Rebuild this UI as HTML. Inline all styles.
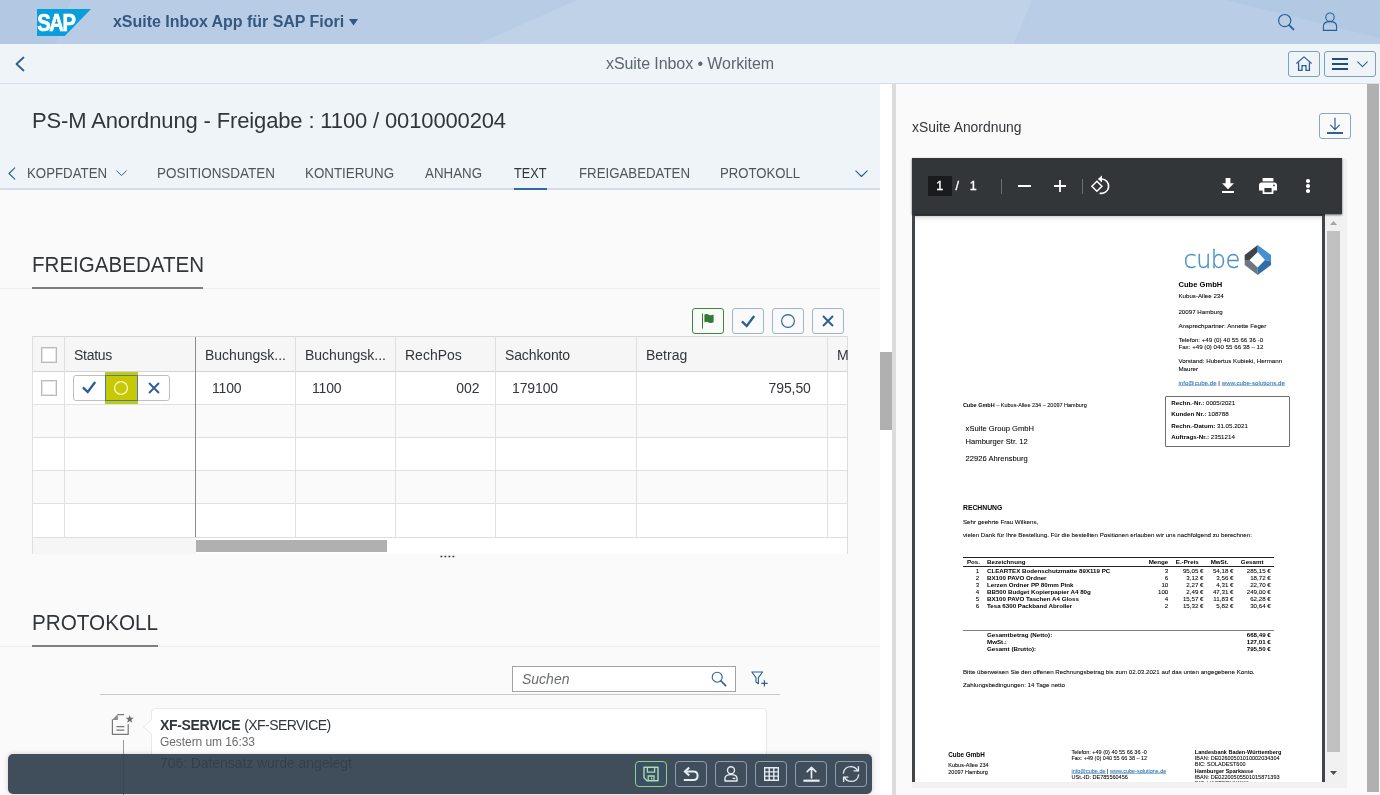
<!DOCTYPE html>
<html lang="de">
<head>
<meta charset="utf-8">
<title>xSuite Inbox • Workitem</title>
<style>
*{box-sizing:border-box;margin:0;padding:0}
html,body{width:1380px;height:795px;overflow:hidden;background:#fafafa}
body{font-family:"Liberation Sans",sans-serif;color:#32363a;position:relative;font-size:14px;will-change:transform}
.abs{position:absolute}
.t{position:absolute;white-space:nowrap;line-height:1}
svg{position:absolute;overflow:visible}
/* shell */
#shell{left:0;top:0;width:1380px;height:44px;background:#b8cce5;overflow:hidden}
#sub{left:0;top:44px;width:1380px;height:40px;background:#eff4f9;border-bottom:1px solid #d3dfed}
/* left pane */
#lhead{left:0;top:84px;width:880px;height:106px;background:#eff4f9}
#lbody{left:0;top:190px;width:880px;height:605px;background:#fafafa}
#vtrack{left:880px;top:84px;width:12px;height:711px;background:#fff}
#vthumb{left:880px;top:352px;width:12px;height:78px;background:#b0b0b0}
#split{left:892px;top:84px;width:4px;height:711px;background:#dcdcdc}
#rpane{left:896px;top:84px;width:484px;height:711px;background:#fafafa}
.tab{font-size:14px;color:#515559;top:166px}
.btn{position:absolute;border:1px solid #8aa3c0;border-radius:3px;background:#fff}
</style>
</head>
<body>
<!-- SHELL HEADER -->
<div id="shell" class="abs">
  <svg width="1380" height="44" viewBox="0 0 1380 44"><polygon points="0,0 71,0 56,44 0,44" fill="#b2c8e3"/><polygon points="71,0 577,0 478,44 56,44" fill="#b8cce5"/><polygon points="577,0 1032,0 1014,44 478,44" fill="#bfd2e8"/><polygon points="1032,0 1226,0 1380,38 1380,44 1015,44" fill="#b9cde6"/><polygon points="1226,0 1380,0 1380,38" fill="#b2c9e3"/></svg>
  <svg style="left:37px;top:9px" width="54" height="27" viewBox="0 0 54 27"><polygon points="0,0 54,0 27.8,27 0,27" fill="#069fdb"/><text transform="translate(0.2,22.1) scale(.858,1)" font-family="Liberation Sans, sans-serif" font-weight="bold" font-size="23.5" fill="#fff" stroke="#fff" stroke-width=".7" letter-spacing="-1.6">SAP</text></svg>
  <div class="t" style="left:113px;top:14px;font-size:16px;font-weight:bold;color:#34587f;letter-spacing:-.03px">xSuite Inbox App für SAP Fiori</div>
  <svg style="left:349px;top:18.6px" width="9" height="7" viewBox="0 0 9 7"><polygon points="0,0 9,0 4.5,6.6" fill="#34587f"/></svg>
</div>
<!-- SUB HEADER -->
<div id="sub" class="abs"></div>
<div class="t" style="left:606px;top:56px;font-size:16px;color:#5d6670;letter-spacing:-.08px">xSuite Inbox • Workitem</div>

<!-- LEFT PANE -->
<div id="lhead" class="abs"></div>
<div id="lbody" class="abs"></div>
<div id="vtrack" class="abs"></div>
<div id="vthumb" class="abs"></div>
<div id="split" class="abs"></div>
<div id="rpane" class="abs"></div>

<div class="t" style="left:32px;top:110px;font-size:22px;color:#32363a;letter-spacing:-.14px">PS-M Anordnung - Freigabe : 1100 / 0010000204</div>

<!-- sub header icons -->
<svg style="left:14px;top:56px" width="12" height="16" viewBox="0 0 12 16"><path d="M9.5 1.5 L2.5 8 L9.5 14.5" fill="none" stroke="#2b5f94" stroke-width="1.8" stroke-linecap="round" stroke-linejoin="round"/></svg>
<div class="btn" style="left:1288px;top:51px;width:32px;height:26px;background:transparent;border-color:#7f9fc0"></div>
<div class="btn" style="left:1324px;top:51px;width:52px;height:26px;background:transparent;border-color:#7f9fc0"></div>
<svg style="left:1296px;top:56px" width="16" height="16" viewBox="0 0 16 16"><path d="M0.7 7.2 L8 0.9 L15.3 7.2" fill="none" stroke="#2b5f94" stroke-width="1.2" stroke-linejoin="round" stroke-linecap="round"/><path d="M2.6 6.6 V14.4 H6 V9.6 H10 V14.4 H13.4 V6.6" fill="none" stroke="#2b5f94" stroke-width="1.3"/></svg>
<svg style="left:1332px;top:58px" width="16" height="12" viewBox="0 0 16 12"><path d="M0 1 H16 M0 6 H16 M0 11 H16" stroke="#1f4e7e" stroke-width="2"/></svg>
<svg style="left:1357px;top:61px" width="11" height="7" viewBox="0 0 11 7"><path d="M0.7 0.8 L5.5 5.6 L10.3 0.8" fill="none" stroke="#2b5f94" stroke-width="1.1" stroke-linecap="round" stroke-linejoin="round"/></svg>
<!-- shell icons -->
<svg style="left:1276px;top:12px" width="20" height="20" viewBox="0 0 20 20"><circle cx="8.7" cy="8.6" r="6.1" fill="none" stroke="#2b5f94" stroke-width="1.2"/><path d="M13.2 13.2 L17.4 17.4" stroke="#2b5f94" stroke-width="1.9" stroke-linecap="round"/></svg>
<svg style="left:1321px;top:11px" width="18" height="21" viewBox="0 0 18 21"><circle cx="9" cy="6.2" r="4.2" fill="none" stroke="#2b5f94" stroke-width="1.1"/><path d="M2.4 19.4 V15.5 C2.4 12.2 5 10.6 9 10.6 C13 10.6 15.6 12.2 15.6 15.5 V19.4 Z" fill="none" stroke="#2b5f94" stroke-width="1.1" stroke-linejoin="round"/></svg>

<!-- TABS -->
<div class="abs" style="left:0;top:188px;width:880px;height:2px;background:#cfdded"></div>
<div class="abs" style="left:514px;top:188px;width:33px;height:2px;background:#2f6aa6"></div>
<svg style="left:8px;top:167px" width="8" height="13" viewBox="0 0 8 13"><path d="M6.8 0.8 L1 6.5 L6.8 12.2" fill="none" stroke="#2b5f94" stroke-width="1.1" stroke-linecap="round" stroke-linejoin="round"/></svg>
<div class="abs" style="left:27px;top:160px;width:2px;height:24px;background:#eff4f9"></div>
<div class="t tab" style="left:27px;transform-origin:0 0;transform:scaleX(.947)">KOPFDATEN</div>
<svg style="left:116px;top:170px" width="11" height="7" viewBox="0 0 11 7"><path d="M0.7 0.8 L5.5 5.6 L10.3 0.8" fill="none" stroke="#2b5f94" stroke-width="1" stroke-linecap="round" stroke-linejoin="round"/></svg>
<div class="t tab" style="left:157px;transform-origin:0 0;transform:scaleX(.962)">POSITIONSDATEN</div>
<div class="t tab" style="left:305px;transform-origin:0 0;transform:scaleX(.954)">KONTIERUNG</div>
<div class="t tab" style="left:425px;transform-origin:0 0;transform:scaleX(.952)">ANHANG</div>
<div class="t tab" style="left:514px;transform-origin:0 0;transform:scaleX(.908);color:#32363a">TEXT</div>
<div class="t tab" style="left:579px;transform-origin:0 0;transform:scaleX(.947)">FREIGABEDATEN</div>
<div class="t tab" style="left:720px;transform-origin:0 0;transform:scaleX(.938)">PROTOKOLL</div>
<svg style="left:855px;top:170px" width="13" height="8" viewBox="0 0 13 8"><path d="M0.8 0.8 L6.5 6.5 L12.2 0.8" fill="none" stroke="#2b5f94" stroke-width="1.1" stroke-linecap="round" stroke-linejoin="round"/></svg>

<!-- SECTION FREIGABEDATEN -->
<div class="abs" style="left:0;top:288px;width:880px;height:1px;background:#ededed"></div>
<div class="abs" style="left:32px;top:287px;width:171px;height:2px;background:#7f7f7f"></div>
<div class="t" style="left:32px;top:254px;font-size:22px;color:#32363a;transform-origin:0 0;transform:scaleX(.934)">FREIGABEDATEN</div>
<!-- TABLE -->
<div class="abs" style="left:32px;top:336px;width:816px;height:218px;background:#fff"></div>
<div class="abs" style="left:32px;top:337px;width:816px;height:34px;background:#f6f6f6"></div>
<div class="abs" style="left:32px;top:405px;width:816px;height:32px;background:#fafafa"></div>
<div class="abs" style="left:32px;top:471px;width:816px;height:32px;background:#fafafa"></div>
<div class="abs" style="left:32px;top:336px;width:816px;height:1px;background:#d9d9d9"></div>
<div class="abs" style="left:32px;top:371px;width:816px;height:1px;background:#d4d4d4"></div>
<div class="abs" style="left:32px;top:404px;width:816px;height:1px;background:#e0e0e0"></div>
<div class="abs" style="left:32px;top:437px;width:816px;height:1px;background:#e0e0e0"></div>
<div class="abs" style="left:32px;top:470px;width:816px;height:1px;background:#e0e0e0"></div>
<div class="abs" style="left:32px;top:503px;width:816px;height:1px;background:#e0e0e0"></div>
<div class="abs" style="left:32px;top:537px;width:816px;height:1px;background:#dedede"></div>
<div class="abs" style="left:32px;top:337px;width:1px;height:217px;background:#e0e0e0"></div>
<div class="abs" style="left:64px;top:337px;width:1px;height:200px;background:#e0e0e0"></div>
<div class="abs" style="left:195px;top:337px;width:1px;height:200px;background:#8c8c8c"></div>
<div class="abs" style="left:295px;top:337px;width:1px;height:200px;background:#e0e0e0"></div>
<div class="abs" style="left:395px;top:337px;width:1px;height:200px;background:#e0e0e0"></div>
<div class="abs" style="left:495px;top:337px;width:1px;height:200px;background:#e0e0e0"></div>
<div class="abs" style="left:636px;top:337px;width:1px;height:200px;background:#e0e0e0"></div>
<div class="abs" style="left:827px;top:337px;width:1px;height:200px;background:#e0e0e0"></div>
<div class="abs" style="left:33px;top:538px;width:163px;height:16px;background:#f6f6f6"></div>
<div class="abs" style="left:196px;top:540px;width:191px;height:12px;background:#b0b0b0"></div>
<div class="abs" style="left:848px;top:336px;width:32px;height:220px;background:#fafafa"></div>
<div class="abs" style="left:847px;top:336px;width:1px;height:218px;background:#dcdcdc"></div>
<div class="abs" style="left:41px;top:347px;width:16px;height:16px;background:#fff;border:1px solid #bababa;box-shadow:inset 0 0 0 1px #e4e4e4"></div>
<div class="abs" style="left:41px;top:380px;width:16px;height:16px;background:#fff;border:1px solid #bababa;box-shadow:inset 0 0 0 1px #e4e4e4"></div>
<div class="t" style="left:74px;top:348px;font-size:14px;letter-spacing:-.28px;color:#32363a">Status</div>
<div class="t" style="left:205px;top:348px;font-size:14px;color:#32363a">Buchungsk...</div>
<div class="t" style="left:305px;top:348px;font-size:14px;color:#32363a">Buchungsk...</div>
<div class="t" style="left:405px;top:348px;font-size:14px;color:#32363a">RechPos</div>
<div class="t" style="left:505px;top:348px;font-size:14px;letter-spacing:-.13px;color:#32363a">Sachkonto</div>
<div class="t" style="left:646px;top:348px;font-size:14px;color:#32363a">Betrag</div>
<div class="abs" style="left:828px;top:340px;width:20px;height:28px;overflow:hidden"><div class="t" style="left:9px;top:8px;font-size:14px;color:#32363a">Me</div></div>
<div class="t" style="left:212px;top:381px;font-size:14px;letter-spacing:-.18px">1100</div>
<div class="t" style="left:312px;top:381px;font-size:14px;letter-spacing:-.18px">1100</div>
<div class="t" style="left:456.3px;top:381px;font-size:14px;">002</div>
<div class="t" style="left:512px;top:381px;font-size:14px;letter-spacing:-.12px">179100</div>
<div class="t" style="left:768.5px;top:381px;font-size:14px;letter-spacing:-.09px">795,50</div>
<div class="abs" style="left:73px;top:375px;width:97px;height:26px;background:#fff;border:1px solid #bfbfbf;border-radius:3px"></div>
<div class="abs" style="left:105px;top:372px;width:33px;height:32px;background:#c9c903"></div>
<div class="abs" style="left:105px;top:375px;width:33px;height:26px;border:1px solid #3f7fc0"></div>
<svg style="left:113px;top:380px" width="16" height="16" viewBox="0 0 16 16"><circle cx="8" cy="8" r="6.4" fill="none" stroke="#fbfbd8" stroke-width="1.2"/></svg>
<svg style="left:82px;top:381px" width="15" height="13" viewBox="0 0 15 13"><path d="M0.9 6.4 L5.7 11 L13.2 1" fill="none" stroke="#2b5f94" stroke-width="2.3"/></svg>
<svg style="left:148px;top:382px" width="12" height="12" viewBox="0 0 12 12"><path d="M1 1 L11 11 M11 1 L1 11" fill="none" stroke="#2b5f94" stroke-width="1.9" stroke-linecap="butt"/></svg>
<div class="btn" style="left:692px;top:308px;width:32px;height:26px;border-color:#3b8a3b;background:transparent"></div>
<div class="btn" style="left:732px;top:308px;width:32px;height:26px;border-color:#9db4ce;background:transparent"></div>
<div class="btn" style="left:772px;top:308px;width:32px;height:26px;border-color:#9db4ce;background:transparent"></div>
<div class="btn" style="left:812px;top:308px;width:32px;height:26px;border-color:#9db4ce;background:transparent"></div>
<svg style="left:701px;top:313px" width="14" height="16" viewBox="0 0 14 16"><path d="M1.5 0.5 V15.5" stroke="#2f7d32" stroke-width="1"/><path d="M3.4 1.6 C5.2 0.7 6.6 1 7.8 1.7 C9.2 2.5 10.8 2.4 12.6 1.5 V9.2 C10.8 10.1 9.2 10.2 7.8 9.4 C6.6 8.7 5.2 8.4 3.4 9.3 Z" fill="#2f7d32"/></svg>
<svg style="left:741px;top:315px" width="15" height="13" viewBox="0 0 15 13"><path d="M0.9 6.4 L5.7 11 L13.2 1" fill="none" stroke="#2b5f94" stroke-width="2.3"/></svg>
<svg style="left:780px;top:313px" width="16" height="16" viewBox="0 0 16 16"><circle cx="8" cy="8" r="6.4" fill="none" stroke="#2b5f94" stroke-width="1.1"/></svg>
<svg style="left:822px;top:315px" width="12" height="12" viewBox="0 0 12 12"><path d="M1 1 L11 11 M11 1 L1 11" fill="none" stroke="#2b5f94" stroke-width="1.9" stroke-linecap="butt"/></svg>
<svg style="left:440px;top:555px" width="15" height="3" viewBox="0 0 15 3"><path d="M0.5 1.5 H14.5" stroke="#32363a" stroke-width="1.7" stroke-dasharray="1.8 2.2"/></svg>

<!-- SECTION PROTOKOLL -->
<div class="abs" style="left:0;top:646px;width:880px;height:1px;background:#ededed"></div>
<div class="abs" style="left:32px;top:645px;width:126px;height:2px;background:#7f7f7f"></div>
<div class="t" style="left:32px;top:612px;font-size:22px;color:#32363a;transform-origin:0 0;transform:scaleX(.94)">PROTOKOLL</div>
<div class="abs" style="left:512px;top:666px;width:224px;height:26px;background:#fff;border:1px solid #a3a3a3"></div>
<div class="t" style="left:522px;top:672px;font-size:14px;font-style:italic;color:#6a6d70">Suchen</div>
<svg style="left:711px;top:671px" width="16" height="16" viewBox="0 0 16 16"><circle cx="6.2" cy="6.2" r="5" fill="none" stroke="#2b5f94" stroke-width="1.1"/><path d="M10 10 L14.6 14.6" stroke="#2b5f94" stroke-width="1.7" stroke-linecap="round"/></svg>
<svg style="left:751px;top:671px" width="18" height="16" viewBox="0 0 18 16"><path d="M0.8 1 H11.6 L7.4 6.6 V12.8 L5 11 V6.6 Z" fill="none" stroke="#2b5f94" stroke-width="1.1" stroke-linejoin="round"/><path d="M13.4 9.2 V15.6 M10.2 12.4 H16.6" stroke="#2b5f94" stroke-width="1.2"/></svg>
<div class="abs" style="left:100px;top:694px;width:680px;height:1px;background:#c9c9c9"></div>
<!-- timeline -->
<div class="abs" style="left:123px;top:740px;width:1px;height:55px;background:#9a9a9a"></div>
<svg style="left:111px;top:713px" width="24" height="23" viewBox="0 0 24 23"><path d="M13 1.6 H6.5 M1.4 6.5 V21.4 H17.2 V11" fill="none" stroke="#757779" stroke-width="1.2" stroke-linejoin="round"/><path d="M1 6.9 L6.9 1 V6.9 Z" fill="#8a8c8e"/><path d="M5.4 13.6 H13.4 M5.4 17.1 H13.4" stroke="#757779" stroke-width="1.1"/><polygon points="18.70,1.90 19.73,4.78 22.79,4.87 20.36,6.74 21.23,9.68 18.70,7.95 16.17,9.68 17.04,6.74 14.61,4.87 17.67,4.78" fill="#6a6d70"/></svg>
<div class="abs" style="left:151px;top:708px;width:616px;height:71px;background:#fff;border:1px solid #e8e8e8;border-radius:4px"></div>
<svg style="left:141.5px;top:719px" width="11" height="16" viewBox="0 0 11 16"><path d="M10 0.5 L1.5 8 L10 15.5" fill="#fff" stroke="#e8e8e8" stroke-width="1"/><rect x="9.5" y="1" width="2" height="14" fill="#fff"/></svg>
<div class="t" style="left:160px;top:718px;font-size:14px;color:#32363a"><b style="letter-spacing:-.35px">XF-SERVICE</b> <span style="letter-spacing:-.55px">(XF-SERVICE)</span></div>
<div class="t" style="left:160px;top:736px;font-size:12px;color:#6a6d70;letter-spacing:-.07px">Gestern um 16:33</div>
<div class="t" style="left:160px;top:756px;font-size:14px;color:#32363a;letter-spacing:-.07px">706: Datensatz wurde angelegt</div>

<!-- FOOTER TOOLBAR -->
<div class="abs" style="left:8px;top:754px;width:864px;height:40px;background:rgba(49,63,77,.93);border-radius:5px;box-shadow:0 0 5px rgba(0,0,0,.18)"></div>
<div class="abs" style="left:635px;top:761px;width:32px;height:26px;border:1px solid #8fd08f;border-radius:4px;background:#3b4f64"></div>
<div class="abs" style="left:675px;top:761px;width:32px;height:26px;border:1px solid #8a9fb6;border-radius:4px"></div>
<div class="abs" style="left:715px;top:761px;width:32px;height:26px;border:1px solid #8a9fb6;border-radius:4px"></div>
<div class="abs" style="left:755px;top:761px;width:32px;height:26px;border:1px solid #8a9fb6;border-radius:4px"></div>
<div class="abs" style="left:795px;top:761px;width:32px;height:26px;border:1px solid #8a9fb6;border-radius:4px"></div>
<div class="abs" style="left:835px;top:761px;width:32px;height:26px;border:1px solid #8a9fb6;border-radius:4px"></div>
<svg style="left:643px;top:766px" width="16" height="16" viewBox="0 0 16 16"><path d="M1 1.2 H15 V14.8 H4 L1 11.8 Z" fill="none" stroke="#a9dda9" stroke-width="1.4" stroke-linejoin="round"/><path d="M4.4 1.4 V6.2 H11.6 V1.4" fill="none" stroke="#a9dda9" stroke-width="1.3"/><path d="M5.2 14.6 V10 H11 V14.6 M8.6 11.6 V13.6" fill="none" stroke="#a9dda9" stroke-width="1.3"/></svg>
<svg style="left:683px;top:766px" width="16" height="16" viewBox="0 0 16 16"><path d="M6.2 1.4 L1.9 5.5 L6.2 9.6" fill="none" stroke="#e4ecf4" stroke-width="2.1" stroke-linejoin="miter" stroke-linecap="butt"/><path d="M2.4 5.5 H10.4 C12.9 5.5 14.6 7.3 14.6 9.7 C14.6 12.2 12.9 14 10.4 14 H0.8" fill="none" stroke="#e4ecf4" stroke-width="2" stroke-linecap="butt"/></svg>
<svg style="left:724px;top:766px" width="14" height="16" viewBox="0 0 14 16"><circle cx="7" cy="4.3" r="3.5" fill="none" stroke="#e4ecf4" stroke-width="1.4"/><path d="M1 15 V12.2 C1 9.8 3.4 8.6 7 8.6 C10.6 8.6 13 9.8 13 12.2 V15 Z" fill="none" stroke="#e4ecf4" stroke-width="1.4" stroke-linejoin="round"/><path d="M8.6 12.4 H11.4" stroke="#e4ecf4" stroke-width="1.3"/></svg>
<svg style="left:764px;top:767px" width="15" height="14" viewBox="0 0 15 14"><path d="M0.7 0.7 H14.3 V13.3 H0.7 Z M5.2 0.7 V13.3 M9.8 0.7 V13.3 M0.7 4.9 H14.3 M0.7 9.1 H14.3" fill="none" stroke="#e4ecf4" stroke-width="1.4"/></svg>
<svg style="left:803px;top:766px" width="17" height="16" viewBox="0 0 17 16"><path d="M8.5 11.8 V1.6 M4.2 5.6 L8.5 1.3 L12.8 5.6" fill="none" stroke="#e4ecf4" stroke-width="1.7" stroke-linecap="round" stroke-linejoin="round"/><path d="M0.4 14.7 H16.6" stroke="#e4ecf4" stroke-width="2.2"/></svg>
<svg style="left:842px;top:765px" width="18" height="18" viewBox="0 0 18 18"><path d="M1.4 8 C1.9 4.2 5 1.6 8.8 1.6 C11.8 1.6 14.2 3.1 15.6 5.6 M16.6 10 C16.1 13.8 13 16.4 9.2 16.4 C6.2 16.4 3.8 14.9 2.4 12.4" fill="none" stroke="#e4ecf4" stroke-width="1.4" stroke-linecap="round"/><path d="M16.4 1.6 V5.9 H12.1 M1.6 16.4 V12.1 H5.9" fill="none" stroke="#e4ecf4" stroke-width="1.4" stroke-linecap="round" stroke-linejoin="round"/></svg>




















<!--PDF--><!-- RIGHT PANE -->
<div class="abs" style="left:1367px;top:84px;width:12px;height:708px;background:#b0b0b0;"></div>
<div class="t" style="left:912.0px;top:118.70px;font-size:15px;color:#32363a;transform-origin:0 0;transform:scaleX(.925)">xSuite Anordnung</div>
<div class="btn" style="left:1319px;top:113px;width:32px;height:26px;border-color:#8aa5c3;background:transparent"></div>
<svg style="left:1327px;top:117px" width="16" height="18" viewBox="0 0 16 18"><path d="M8 1 V12.4 M3.6 8.2 L8 12.6 L12.4 8.2" fill="none" stroke="#2b5f94" stroke-width="1.2" stroke-linecap="round" stroke-linejoin="round"/><path d="M0 16 H16" stroke="#1f4e7e" stroke-width="1.8"/></svg>
<div class="abs" style="left:912px;top:158px;width:435px;height:630px;background:#f1f1f1;"></div>
<div class="abs" style="left:912px;top:214px;width:413px;height:568px;background:#42464a;"></div>
<div class="abs" style="left:915px;top:216px;width:407px;height:566px;background:linear-gradient(#dedede,#f6f6f6 3px,#fff 7px);"></div>
<div class="abs" style="left:912px;top:158px;width:430px;height:56px;background:#323639;box-shadow:0 1px 2px rgba(0,0,0,.6)"></div>
<div class="abs" style="left:928px;top:176px;width:24px;height:20px;background:#191b1c;"></div>
<div class="t" style="left:936.3px;top:179.72px;font-size:12.5px;color:#fff;-webkit-text-stroke:.35px #fff">1</div>
<div class="t" style="left:955.6px;top:179.72px;font-size:12.5px;color:#fff;-webkit-text-stroke:.35px #fff">/</div>
<div class="t" style="left:969.8px;top:179.72px;font-size:12.5px;color:#fff;-webkit-text-stroke:.35px #fff">1</div>
<div class="abs" style="left:1001px;top:179px;width:1px;height:15px;background:#6b6f72;"></div>
<div class="abs" style="left:1082px;top:179px;width:1px;height:15px;background:#6b6f72;"></div>
<svg style="left:1018px;top:185px" width="13" height="2" viewBox="0 0 13 2"><rect width="13" height="2" fill="#fff"/></svg>
<svg style="left:1054px;top:180px" width="12" height="12" viewBox="0 0 12 12"><path d="M0 6 H12 M6 0 V12" stroke="#fff" stroke-width="1.8"/></svg>
<svg style="left:1090px;top:174px" width="22" height="22" viewBox="0 0 22 22"><path d="M6.9 7.3 L11.9 12.3 L6.9 17.3 L1.9 12.3 Z" fill="none" stroke="#fff" stroke-width="1.5"/><path d="M11.5 5 A7.2 7.2 0 1 1 9.6 19.15" fill="none" stroke="#fff" stroke-width="1.6"/><path d="M7.8 5 L12 1.4 V8.6 Z" fill="#fff"/></svg>
<svg style="left:1222px;top:178px" width="12" height="15" viewBox="0 0 12 15"><path d="M3.6 0 H8.4 V5.2 H12 L6 11.2 L0 5.2 H3.6 Z" fill="#fff"/><rect x="0" y="13" width="12" height="2" fill="#fff"/></svg>
<svg style="left:1259px;top:178px" width="18" height="16" viewBox="0 0 18 16"><rect x="3.6" y="0" width="10.8" height="3.4" fill="#fff"/><path d="M2.6 4.6 H15.4 C16.9 4.6 18 5.7 18 7.2 V12.4 H14.4 V16 H3.6 V12.4 H0 V7.2 C0 5.7 1.1 4.6 2.6 4.6 Z M5.4 10 V14.2 H12.6 V10 Z" fill="#fff" fill-rule="evenodd"/><circle cx="15" cy="7.4" r=".9" fill="#323639"/></svg>
<div class="abs" style="left:1306.2px;top:179.0px;width:3.6px;height:3.6px;border-radius:50%;background:#fff"></div>
<div class="abs" style="left:1306.2px;top:184.29999999999998px;width:3.6px;height:3.6px;border-radius:50%;background:#fff"></div>
<div class="abs" style="left:1306.2px;top:189.39999999999998px;width:3.6px;height:3.6px;border-radius:50%;background:#fff"></div>
<div class="abs" style="left:1327px;top:231px;width:13px;height:521px;background:#c1c1c1;"></div>
<svg style="left:1330px;top:221px" width="7" height="4" viewBox="0 0 7 4"><path d="M0 4 L3.5 0 L7 4 Z" fill="#a3a3a3"/></svg>
<svg style="left:1330px;top:771px" width="7" height="4" viewBox="0 0 7 4"><path d="M0 0 L3.5 4 L7 0 Z" fill="#505050"/></svg>
<div class="t" style="left:1183.5px;top:247.7px;font-family:'DejaVu Sans Light','DejaVu Sans',sans-serif;font-weight:200;font-size:24px;color:#4a90c9;letter-spacing:-.55px;-webkit-text-stroke:.35px #4a90c9">cube</div>
<svg style="left:1244px;top:245px" width="28" height="30" viewBox="0 0 28 30"><polygon points="13.7,0 0.7,10 0.7,15 5.5,15 13.7,7" fill="#3d454b"/><polygon points="0.7,15 0.7,20 13.7,30 13.7,22.5 5.5,15" fill="#6f787f"/><polygon points="13.7,0 27,10 27,16.5 21,15 13.7,7" fill="#4292d3"/><polygon points="27,16.5 27,20 13.7,30 13.7,22.5 21,15" fill="#2f6ea8"/></svg>
<div class="abs" style="left:1165px;top:396px;width:125px;height:51px;border:1px solid #6e6e6e;border-radius:1px;background:#fff"></div>
<div class="abs" style="left:963px;top:557px;width:311px;height:1.2px;background:#222;"></div>
<div class="abs" style="left:963px;top:565.8px;width:311px;height:1.2px;background:#222;"></div>
<div class="abs" style="left:963px;top:630px;width:311px;height:1px;background:#808080;"></div>
<div class="abs" style="left:1194.8px;top:780.5px;width:90px;height:1.5px;overflow:hidden"><div class="t p" style="left:0;top:0;font-size:5.5px;color:#111">BIC: HASPDEHHXXX</div></div>
<div class="abs" style="left:0;top:0;width:5520px;height:3180px;transform-origin:0 0;transform:scale(.25);color:#000;-webkit-text-stroke:.28px #000">
<div class="t" style="left:4713.6px;top:1120.7px;font-size:30.40px;font-weight:bold;-webkit-text-stroke-width:0;">Cube GmbH</div>
<div class="t" style="left:4713.6px;top:1172.7px;font-size:24.72px;">Kubus-Allee 234</div>
<div class="t" style="left:4713.6px;top:1234.3px;font-size:24.72px;">20097 Hamburg</div>
<div class="t" style="left:4713.6px;top:1290.7px;font-size:24.72px;">Ansprechpartner: Annette Feger</div>
<div class="t" style="left:4713.6px;top:1347.9px;font-size:24.72px;">Telefon: +49 (0) 40 55 66 36 -0</div>
<div class="t" style="left:4713.6px;top:1376.3px;font-size:24.72px;">Fax: +49 (0) 040 55 66 38 – 12</div>
<div class="t" style="left:4713.6px;top:1431.9px;font-size:24.72px;">Vorstand: Hubertus Kubieki, Hermann</div>
<div class="t" style="left:4713.6px;top:1461.9px;font-size:24.72px;">Maurer</div>
<div class="t" style="left:4713.6px;top:1518.3px;font-size:24.72px;"><u style="color:#2e74b5;-webkit-text-stroke-color:#2e74b5">info@cube.de</u> | <u style="color:#2e74b5;-webkit-text-stroke-color:#2e74b5">www.cube-solutions.de</u></div>
<div class="t" style="left:4685.2px;top:1600.3px;font-size:24.72px;"><b style="-webkit-text-stroke-width:0">Rechn.-Nr.:</b> 0005/2021</div>
<div class="t" style="left:4685.2px;top:1645.1px;font-size:24.72px;"><b style="-webkit-text-stroke-width:0">Kunden Nr.:</b> 108788</div>
<div class="t" style="left:4685.2px;top:1689.9px;font-size:24.72px;"><b style="-webkit-text-stroke-width:0">Rechn.-Datum:</b> 31.05.2021</div>
<div class="t" style="left:4685.2px;top:1734.7px;font-size:24.72px;"><b style="-webkit-text-stroke-width:0">Auftrags-Nr.:</b> 2351214</div>
<div class="t" style="left:3851.6px;top:1609.4px;font-size:22.00px;"><b style="-webkit-text-stroke-width:0">Cube GmbH</b> – Kubus-Allee 234 – 20097 Hamburg</div>
<div class="t" style="left:3862.4px;top:1697.9px;font-size:30.40px;">xSuite Group GmbH</div>
<div class="t" style="left:3862.4px;top:1749.9px;font-size:30.40px;">Hamburger Str. 12</div>
<div class="t" style="left:3862.4px;top:1818.3px;font-size:30.40px;">22926 Ahrensburg</div>
<div class="t" style="left:3852.0px;top:2018.2px;font-size:27.20px;font-weight:bold;-webkit-text-stroke-width:0;">RECHNUNG</div>
<div class="t" style="left:3852.0px;top:2074.7px;font-size:24.72px;">Sehr geehrte Frau Wilkens,</div>
<div class="t" style="left:3852.0px;top:2127.1px;font-size:24.72px;">vielen Dank für Ihre Bestellung. Für die bestellten Positionen erlauben wir uns nachfolgend zu berechnen:</div>
<div class="t" style="left:3867.6px;top:2236.3px;font-size:24.72px;font-weight:bold;-webkit-text-stroke-width:0;">Pos.</div>
<div class="t" style="left:3948.0px;top:2236.3px;font-size:24.72px;font-weight:bold;-webkit-text-stroke-width:0;">Bezeichnung</div>
<div class="t" style="right:846.8px;top:2236.3px;font-size:24.72px;font-weight:bold;-webkit-text-stroke-width:0;">Menge</div>
<div class="t" style="right:724.8px;top:2236.3px;font-size:24.72px;font-weight:bold;-webkit-text-stroke-width:0;">E.-Preis</div>
<div class="t" style="right:606.0px;top:2236.3px;font-size:24.72px;font-weight:bold;-webkit-text-stroke-width:0;">MwSt.</div>
<div class="t" style="right:466.0px;top:2236.3px;font-size:24.72px;font-weight:bold;-webkit-text-stroke-width:0;">Gesamt</div>
<div class="t" style="right:1603.6px;top:2271.9px;font-size:24.72px;">1</div>
<div class="t" style="left:3948.0px;top:2271.9px;font-size:24.72px;font-weight:bold;-webkit-text-stroke-width:0;">CLEARTEX Bodenschutzmatte 89X119 PC</div>
<div class="t" style="right:846.8px;top:2271.9px;font-size:24.72px;">3</div>
<div class="t" style="right:706.0px;top:2271.9px;font-size:24.72px;">95,05 €</div>
<div class="t" style="right:586.0px;top:2271.9px;font-size:24.72px;">54,18 €</div>
<div class="t" style="right:436.8px;top:2271.9px;font-size:24.72px;">285,15 €</div>
<div class="t" style="right:1603.6px;top:2299.9px;font-size:24.72px;">2</div>
<div class="t" style="left:3948.0px;top:2299.9px;font-size:24.72px;font-weight:bold;-webkit-text-stroke-width:0;">BX100 PAVO Ordner</div>
<div class="t" style="right:846.8px;top:2299.9px;font-size:24.72px;">6</div>
<div class="t" style="right:706.0px;top:2299.9px;font-size:24.72px;">3,12 €</div>
<div class="t" style="right:586.0px;top:2299.9px;font-size:24.72px;">3,56 €</div>
<div class="t" style="right:436.8px;top:2299.9px;font-size:24.72px;">18,72 €</div>
<div class="t" style="right:1603.6px;top:2327.9px;font-size:24.72px;">3</div>
<div class="t" style="left:3948.0px;top:2327.9px;font-size:24.72px;font-weight:bold;-webkit-text-stroke-width:0;">Lerzen Ordner PP 80mm Pink</div>
<div class="t" style="right:846.8px;top:2327.9px;font-size:24.72px;">10</div>
<div class="t" style="right:706.0px;top:2327.9px;font-size:24.72px;">2,27 €</div>
<div class="t" style="right:586.0px;top:2327.9px;font-size:24.72px;">4,31 €</div>
<div class="t" style="right:436.8px;top:2327.9px;font-size:24.72px;">22,70 €</div>
<div class="t" style="right:1603.6px;top:2355.9px;font-size:24.72px;">4</div>
<div class="t" style="left:3948.0px;top:2355.9px;font-size:24.72px;font-weight:bold;-webkit-text-stroke-width:0;">BB500 Budget Kopierpapier A4 80g</div>
<div class="t" style="right:846.8px;top:2355.9px;font-size:24.72px;">100</div>
<div class="t" style="right:706.0px;top:2355.9px;font-size:24.72px;">2,49 €</div>
<div class="t" style="right:586.0px;top:2355.9px;font-size:24.72px;">47,31 €</div>
<div class="t" style="right:436.8px;top:2355.9px;font-size:24.72px;">249,00 €</div>
<div class="t" style="right:1603.6px;top:2383.9px;font-size:24.72px;">5</div>
<div class="t" style="left:3948.0px;top:2383.9px;font-size:24.72px;font-weight:bold;-webkit-text-stroke-width:0;">BX100 PAVO Taschen A4 Gloss</div>
<div class="t" style="right:846.8px;top:2383.9px;font-size:24.72px;">4</div>
<div class="t" style="right:706.0px;top:2383.9px;font-size:24.72px;">15,57 €</div>
<div class="t" style="right:586.0px;top:2383.9px;font-size:24.72px;">11,83 €</div>
<div class="t" style="right:436.8px;top:2383.9px;font-size:24.72px;">62,28 €</div>
<div class="t" style="right:1603.6px;top:2411.9px;font-size:24.72px;">6</div>
<div class="t" style="left:3948.0px;top:2411.9px;font-size:24.72px;font-weight:bold;-webkit-text-stroke-width:0;">Tesa 6300 Packband Abroller</div>
<div class="t" style="right:846.8px;top:2411.9px;font-size:24.72px;">2</div>
<div class="t" style="right:706.0px;top:2411.9px;font-size:24.72px;">15,32 €</div>
<div class="t" style="right:586.0px;top:2411.9px;font-size:24.72px;">5,82 €</div>
<div class="t" style="right:436.8px;top:2411.9px;font-size:24.72px;">30,64 €</div>
<div class="t" style="left:3948.0px;top:2525.9px;font-size:24.72px;font-weight:bold;-webkit-text-stroke-width:0;">Gesamtbetrag (Netto):</div>
<div class="t" style="right:436.8px;top:2525.9px;font-size:24.72px;font-weight:bold;-webkit-text-stroke-width:0;">668,49 €</div>
<div class="t" style="left:3948.0px;top:2553.9px;font-size:24.72px;font-weight:bold;-webkit-text-stroke-width:0;">MwSt.:</div>
<div class="t" style="right:436.8px;top:2553.9px;font-size:24.72px;font-weight:bold;-webkit-text-stroke-width:0;">127,01 €</div>
<div class="t" style="left:3948.0px;top:2581.9px;font-size:24.72px;font-weight:bold;-webkit-text-stroke-width:0;">Gesamt (Brutto):</div>
<div class="t" style="right:436.8px;top:2581.9px;font-size:24.72px;font-weight:bold;-webkit-text-stroke-width:0;">795,50 €</div>
<div class="t" style="left:3852.0px;top:2673.9px;font-size:24.72px;">Bitte überweisen Sie den offenen Rechnungsbetrag bis zum 02.03.2021 auf das unten angegebene Konto.</div>
<div class="t" style="left:3852.0px;top:2725.9px;font-size:24.72px;">Zahlungsbedingungen: 14 Tage netto</div>
<div class="t" style="left:3793.2px;top:3006.2px;font-size:25.28px;font-weight:bold;-webkit-text-stroke-width:0;">Cube GmbH</div>
<div class="t" style="left:3793.2px;top:3049.4px;font-size:22.00px;">Kubus-Allee 234</div>
<div class="t" style="left:3793.2px;top:3076.2px;font-size:22.00px;">20097 Hamburg</div>
<div class="t" style="left:4286.0px;top:2997.0px;font-size:22.00px;">Telefon: +49 (0) 40 55 66 36 -0</div>
<div class="t" style="left:4286.0px;top:3022.6px;font-size:22.00px;">Fax: +49 (0) 040 55 66 38 – 12</div>
<div class="t" style="left:4286.0px;top:3072.2px;font-size:22.00px;"><u style="color:#2e74b5;-webkit-text-stroke-color:#2e74b5">info@cube.de</u> | <u style="color:#2e74b5;-webkit-text-stroke-color:#2e74b5">www.cube-solutions.de</u></div>
<div class="t" style="left:4286.0px;top:3099.0px;font-size:22.00px;">USt.-ID: DE785560456</div>
<div class="t" style="left:4779.2px;top:2997.0px;font-size:22.00px;font-weight:bold;-webkit-text-stroke-width:0;">Landesbank Baden-Württemberg</div>
<div class="t" style="left:4779.2px;top:3022.6px;font-size:22.00px;">IBAN: DE02600501010002034304</div>
<div class="t" style="left:4779.2px;top:3046.6px;font-size:22.00px;">BIC: SOLADEST600</div>
<div class="t" style="left:4779.2px;top:3072.2px;font-size:22.00px;font-weight:bold;-webkit-text-stroke-width:0;">Hamburger Sparkasse</div>
<div class="t" style="left:4779.2px;top:3099.0px;font-size:22.00px;">IBAN: DE02200505501015871393</div>
</div>
<!--/PDF-->
</body>
</html>
